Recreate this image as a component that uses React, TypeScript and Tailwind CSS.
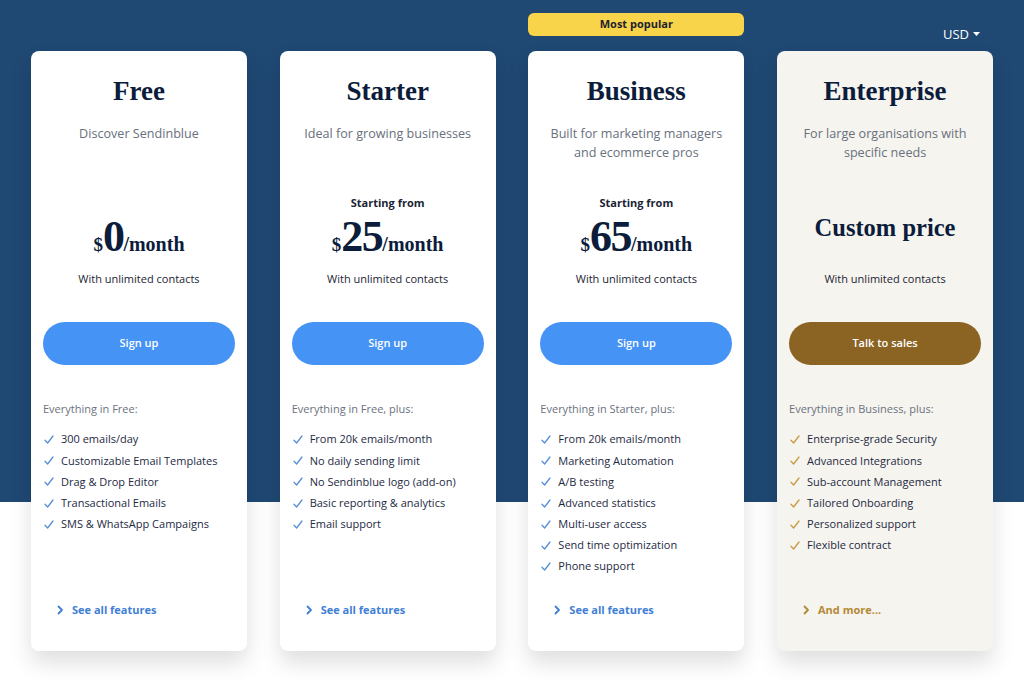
import React from "react";

type Plan = {
  title: string;
  subtitle: React.ReactNode;
  starting: boolean;
  price?: string;
  custom?: boolean;
  cta: string;
  header: string;
  features: string[];
  link: string;
  enterprise?: boolean;
  popular?: boolean;
};

const plans: Plan[] = [
  {
    title: "Free",
    subtitle: "Discover Sendinblue",
    starting: false,
    price: "0",
    cta: "Sign up",
    header: "Everything in Free:",
    features: [
      "300 emails/day",
      "Customizable Email Templates",
      "Drag & Drop Editor",
      "Transactional Emails",
      "SMS & WhatsApp Campaigns",
    ],
    link: "See all features",
  },
  {
    title: "Starter",
    subtitle: "Ideal for growing businesses",
    starting: true,
    price: "25",
    cta: "Sign up",
    header: "Everything in Free, plus:",
    features: [
      "From 20k emails/month",
      "No daily sending limit",
      "No Sendinblue logo (add-on)",
      "Basic reporting & analytics",
      "Email support",
    ],
    link: "See all features",
  },
  {
    title: "Business",
    subtitle: (
      <>
        Built for marketing managers
        <br />
        and ecommerce pros
      </>
    ),
    starting: true,
    price: "65",
    cta: "Sign up",
    header: "Everything in Starter, plus:",
    features: [
      "From 20k emails/month",
      "Marketing Automation",
      "A/B testing",
      "Advanced statistics",
      "Multi-user access",
      "Send time optimization",
      "Phone support",
    ],
    link: "See all features",
    popular: true,
  },
  {
    title: "Enterprise",
    subtitle: (
      <>
        For large organisations with
        <br />
        specific needs
      </>
    ),
    starting: false,
    custom: true,
    cta: "Talk to sales",
    header: "Everything in Business, plus:",
    features: [
      "Enterprise-grade Security",
      "Advanced Integrations",
      "Sub-account Management",
      "Tailored Onboarding",
      "Personalized support",
      "Flexible contract",
    ],
    link: "And more...",
    enterprise: true,
  },
];

const serif = "font-['Liberation_Serif','Times_New_Roman',serif]";

function Check({ color }: { color: string }) {
  return (
    <svg width="10" height="9" viewBox="0 0 10 9" fill="none" className="shrink-0">
      <path d="M1 5.2 L3.6 8 L9 1" stroke={color} strokeWidth="1.3" strokeLinecap="round" strokeLinejoin="round" />
    </svg>
  );
}

function Chevron({ color }: { color: string }) {
  return (
    <svg width="7" height="10" viewBox="0 0 7 10" fill="none" className="shrink-0">
      <path d="M1.5 1.5 L5 5 L1.5 8.5" stroke={color} strokeWidth="1.8" strokeLinecap="round" strokeLinejoin="round" />
    </svg>
  );
}

function Card({ p }: { p: Plan }) {
  const ent = !!p.enterprise;
  return (
    <div
      className={`flex h-[600px] flex-col rounded-[8px] px-[12px] pt-[24px] pb-[33px] shadow-[0_12px_22px_rgba(0,0,0,0.13)] ${
        ent ? "bg-[#f6f4ef]" : "bg-white"
      }`}
    >
      <div className={`${serif} text-center text-[27px] font-bold leading-[32px] text-[#0c1c3b]`}>{p.title}</div>
      <div className="mt-[17px] h-[38px] text-center text-[12.6px] leading-[19px] text-[#68707d]">{p.subtitle}</div>
      <div className="mt-[34px] flex h-[64px] flex-col items-center">
        {p.custom ? (
          <div className={`${serif} flex h-[64px] items-center text-[24.5px] font-bold text-[#0c1c3b]`}>Custom price</div>
        ) : (
          <>
            <div className={`text-[11px] font-bold leading-[14px] text-[#1b2433] ${p.starting ? "" : "invisible"}`}>
              Starting from
            </div>
            <div className={`${serif} mt-[5px] flex h-[45px] items-baseline font-bold leading-none text-[#0c1c3b]`}>
              <span className="text-[19px]">$</span>
              <span className="text-[44px] tracking-[-1.5px]">{p.price}</span>
              <span className="text-[20px]">/month</span>
            </div>
          </>
        )}
      </div>
      <div className="mt-[11px] text-center text-[11px] leading-[16px] text-[#1b2433]">With unlimited contacts</div>
      <button
        className={`mt-[35px] flex h-[43px] w-full items-center justify-center rounded-full text-[11px] font-semibold text-white ${
          ent ? "bg-[#8b6423]" : "bg-[#4593f5]"
        }`}
      >
        {p.cta}
      </button>
      <div className="mt-[36px] text-[11px] leading-[16px] text-[#6b7280]">{p.header}</div>
      <ul className="mt-[12px] flex flex-col">
        {p.features.map((f) => (
          <li key={f} className="flex h-[21.2px] items-center gap-[7px] pl-[1px] text-[11px] text-[#1d2a3f]">
            <Check color={ent ? "#c79b45" : "#5a8fd8"} />
            <span>{f}</span>
          </li>
        ))}
      </ul>
      <div className="mt-auto flex items-center gap-[8px] pl-[14px] text-[11px] font-bold leading-[16px]">
        <Chevron color={ent ? "#b38a35" : "#3f80d6"} />
        <span className={ent ? "text-[#b38a35]" : "text-[#3f80d6]"}>{p.link}</span>
      </div>
    </div>
  );
}

export default function App() {
  return (
    <div className="h-[680px] w-[1024px] overflow-hidden bg-[linear-gradient(to_bottom,#1f4873_0px,#1f4873_502px,#ffffff_502px)] font-['Open_Sans','Noto_Sans',sans-serif]">
      <div className="flex justify-center gap-x-[32.7px]">
        {plans.map((p, i) => (
          <div key={p.title} className="flex w-[216px] flex-col">
            <div className="flex h-[51px] flex-col">
              {p.popular && (
                <div className="mt-[13px] flex h-[23px] items-center justify-center rounded-[6px] bg-[#f8d44a] text-[11px] font-bold text-[#1d2230]">
                  Most popular
                </div>
              )}
              {i === 3 && (
                <div className="mt-[25px] flex items-center justify-end gap-[4px] pr-[13px] text-[13px] leading-[18px] text-white">
                  <span>USD</span>
                  <svg width="7" height="4" viewBox="0 0 7 4">
                    <path d="M0 0 L7 0 L3.5 4 Z" fill="white" />
                  </svg>
                </div>
              )}
            </div>
            <Card p={p} />
          </div>
        ))}
      </div>
    </div>
  );
}
